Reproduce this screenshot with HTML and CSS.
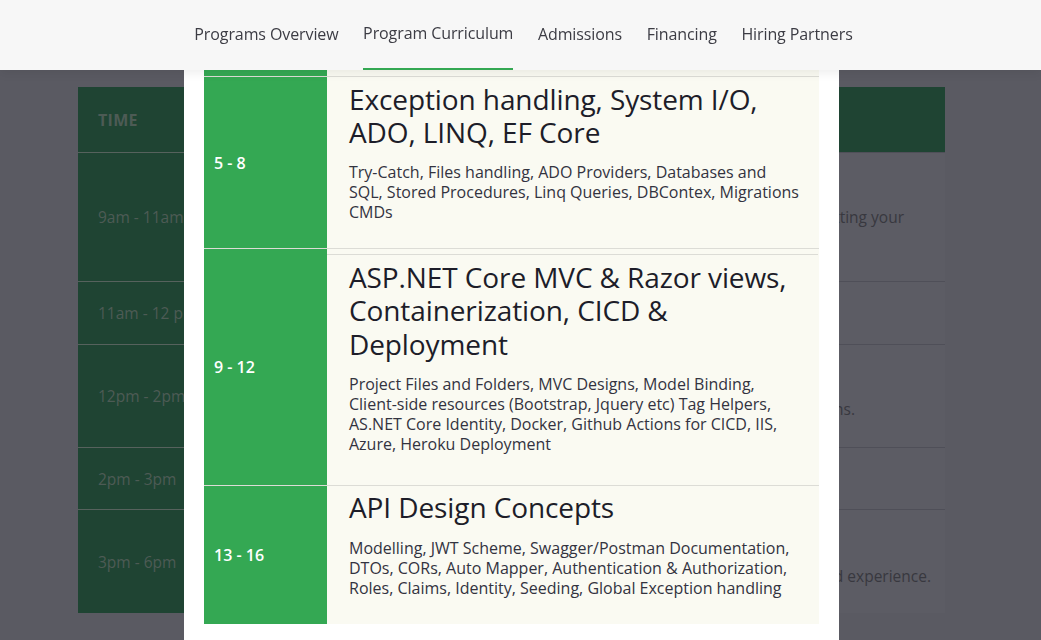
FILE: index.html
```html
<!DOCTYPE html>
<html lang="en">
<head>
<meta charset="utf-8">
<title>Program Curriculum</title>
<link rel="stylesheet" href="styles.css">
</head>
<body>
<header class="topnav">
  <nav class="topnav__links">
    <a class="topnav__link" href="#">Programs Overview</a>
    <a class="topnav__link topnav__link--active" href="#">Program Curriculum</a>
    <a class="topnav__link" href="#">Admissions</a>
    <a class="topnav__link" href="#">Financing</a>
    <a class="topnav__link" href="#">Hiring Partners</a>
  </nav>
</header>

<main class="page">
  <div class="schedule">
    <div class="schedule__row schedule__row--head">
      <div class="schedule__time">TIME</div>
      <div class="schedule__activity"></div>
      <div class="schedule__desc"></div>
    </div>
    <div class="schedule__row schedule__row--r1">
      <div class="schedule__time">9am - 11am</div>
      <div class="schedule__activity"></div>
      <div class="schedule__desc schedule__desc--e1"><span>getting your</span></div>
    </div>
    <div class="schedule__row schedule__row--r2">
      <div class="schedule__time">11am - 12 pm</div>
      <div class="schedule__activity"></div>
      <div class="schedule__desc"></div>
    </div>
    <div class="schedule__row schedule__row--r3">
      <div class="schedule__time">12pm - 2pm</div>
      <div class="schedule__activity"></div>
      <div class="schedule__desc schedule__desc--e3"><span>questions.</span></div>
    </div>
    <div class="schedule__row schedule__row--r4">
      <div class="schedule__time">2pm - 3pm</div>
      <div class="schedule__activity"></div>
      <div class="schedule__desc"></div>
    </div>
    <div class="schedule__row schedule__row--r5">
      <div class="schedule__time">3pm - 6pm</div>
      <div class="schedule__activity"></div>
      <div class="schedule__desc schedule__desc--e5"><span>and experience.</span></div>
    </div>
  </div>
</main>

<div class="modal">
  <div class="curriculum">
    <div class="curriculum__row curriculum__row--scrolled">
      <div class="curriculum__weeks"></div>
      <div class="curriculum__body"></div>
    </div>
    <div class="curriculum__row">
      <div class="curriculum__weeks">5 - 8</div>
      <div class="curriculum__body">
        <h3 class="curriculum__title">Exception handling, System I/O, ADO, LINQ, EF Core</h3>
        <p class="curriculum__text">Try-Catch, Files handling, ADO Providers, Databases and SQL, Stored Procedures, Linq Queries, DBContex, Migrations CMDs</p>
      </div>
    </div>
    <div class="curriculum__row">
      <div class="curriculum__weeks">9 - 12</div>
      <div class="curriculum__body curriculum__body--nested">
        <div class="curriculum__inner">
          <h3 class="curriculum__title">ASP.NET Core MVC &amp; Razor views, Containerization, CICD &amp; Deployment</h3>
          <p class="curriculum__text">Project Files and Folders, MVC Designs, Model Binding, Client-side resources (Bootstrap, Jquery etc) Tag Helpers, AS.NET Core Identity, Docker, Github Actions for CICD, IIS, Azure, Heroku Deployment</p>
        </div>
      </div>
    </div>
    <div class="curriculum__row curriculum__row--last">
      <div class="curriculum__weeks">13 - 16</div>
      <div class="curriculum__body">
        <h3 class="curriculum__title">API Design Concepts</h3>
        <p class="curriculum__text">Modelling, JWT Scheme, Swagger/Postman Documentation, DTOs, CORs, Auto Mapper, Authentication &amp; Authorization, Roles, Claims, Identity, Seeding, Global Exception handling</p>
      </div>
    </div>
  </div>
</div>
</body>
</html>
```
FILE: styles.css
```css
* { box-sizing: border-box; }

html, body {
  margin: 0;
  height: 100%;
  overflow: hidden;
}

body {
  font-family: "Open Sans", "Noto Sans", sans-serif;
  font-size: 16px;
  background: #5a5a62;
  color: #333;
}

/* ---------- top navigation ---------- */
.topnav {
  position: fixed;
  top: 0;
  left: 0;
  right: 0;
  height: 70px;
  background: #f7f7f7;
  box-shadow: 0 3px 10px rgba(0, 0, 0, 0.07);
  z-index: 30;
}

.topnav__links {
  display: flex;
  justify-content: center;
  height: 100%;
  padding-left: 6px;
}

.topnav__link {
  display: flex;
  align-items: center;
  height: 70px;
  margin: 0 12.3px;
  padding-bottom: 3px;
  color: #3c3c44;
  text-decoration: none;
  font-size: 16px;
  letter-spacing: -0.1px;
}

.topnav__link--active {
  border-bottom: 2px solid #34a853;
  padding-bottom: 3px;
}

/* ---------- page behind the modal (dimmed) ---------- */
.page {
  padding: 87px 96px 0 78px;
}

.schedule {
  width: 867px;
}

.schedule__row {
  display: grid;
  grid-template-columns: 220px 541px 1fr;
  border-top: 1px solid #4f4f58;
}

.schedule__row--head {
  border-top: 0;
  height: 65px;
  background: #1f4433;
}

.schedule__row--r1 { height: 129px; }
.schedule__row--r2 { height: 63px; }
.schedule__row--r3 { height: 103px; }
.schedule__row--r4 { height: 62px; }
.schedule__row--r5 { height: 104px; }

.schedule__time {
  display: flex;
  align-items: center;
  padding-left: 20px;
  background: #1f4433;
  color: #4d5b55;
  font-size: 15.5px;
  white-space: nowrap;
  overflow: hidden;
}

.schedule__row:not(.schedule__row--head) .schedule__time {
  box-shadow: 0 -1px 0 #56625d;
}

.schedule__row--head .schedule__time {
  font-weight: 700;
  font-size: 16px;
  letter-spacing: 0.3px;
}

.schedule__activity {
  background: #5c5c64;
}

.schedule__desc {
  display: flex;
  align-items: center;
  justify-content: flex-end;
  overflow: hidden;
  background: #5c5c64;
  color: #38383f;
  font-size: 15.5px;
  line-height: 26px;
  white-space: nowrap;
}

.schedule__row--head .schedule__activity,
.schedule__row--head .schedule__desc { background: #1f4433; }

.schedule__desc span { flex-shrink: 0; }

.schedule__desc--e1 { padding-right: 41px; }
.schedule__desc--e3 { padding-right: 90px; padding-top: 25px; }
.schedule__desc--e5 { padding-right: 14px; padding-top: 28px; }

/* ---------- modal ---------- */
.modal {
  position: fixed;
  top: 0;
  bottom: 0;
  left: 184px;
  width: 655px;
  padding: 0 20px;
  background: #ffffff;
  overflow: hidden;
  z-index: 20;
}

.curriculum__row {
  display: grid;
  grid-template-columns: 123px 1fr;
  border-bottom: 1px solid #dcdcd6;
}

.curriculum__row--scrolled {
  height: 77px;
}

.curriculum__row--last {
  border-bottom: 0;
}

.curriculum__weeks {
  display: flex;
  align-items: center;
  padding-left: 10px;
  background: #34a853;
  color: #ffffff;
  font-size: 16px;
  font-weight: 600;
}

.curriculum__body {
  padding: 5.5px 18px 26px 22px;
  background: #fafaf2;
}

.curriculum__body--nested {
  padding: 5px 1px 5px 0;
}

.curriculum__inner {
  padding: 5.5px 17px 26px 22px;
  border-top: 1px solid #dcdcd6;
}

.curriculum__title {
  margin: 0 0 12.5px;
  font-size: 28px;
  font-weight: 400;
  line-height: 1.2;
  color: #1d1d29;
  letter-spacing: -0.1px;
}

.curriculum__text {
  margin: 0;
  font-size: 16px;
  line-height: 20px;
  color: #33333f;
}
```
